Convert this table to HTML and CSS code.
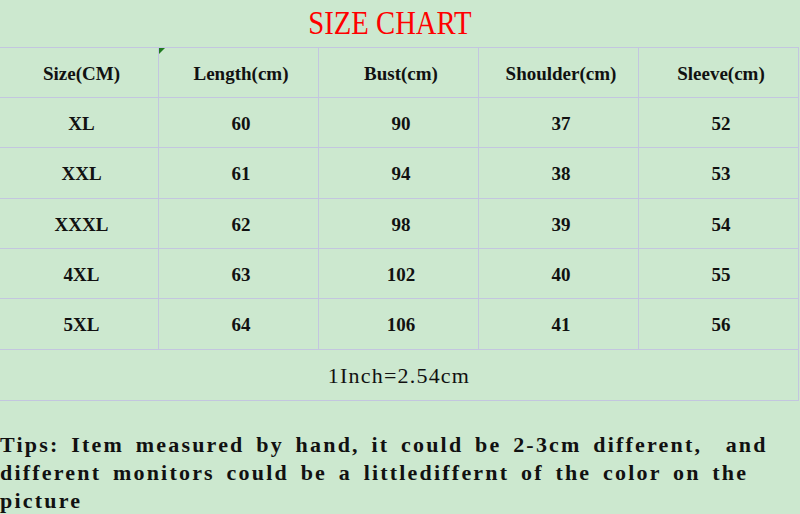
FILE: index.html
```html
<!DOCTYPE html>
<html>
<head>
<meta charset="utf-8">
<link rel="stylesheet" href="styles.css">
</head>
<body>
<div class="page">
  <h1 class="title"><span class="title-text">SIZE CHART</span></h1>
  <div class="chart">
    <div class="cell head">Size(CM)</div>
    <div class="cell head flag">Length(cm)</div>
    <div class="cell head">Bust(cm)</div>
    <div class="cell head">Shoulder(cm)</div>
    <div class="cell head">Sleeve(cm)</div>

    <div class="cell">XL</div><div class="cell">60</div><div class="cell">90</div><div class="cell">37</div><div class="cell">52</div>
    <div class="cell">XXL</div><div class="cell">61</div><div class="cell">94</div><div class="cell">38</div><div class="cell">53</div>
    <div class="cell">XXXL</div><div class="cell">62</div><div class="cell">98</div><div class="cell">39</div><div class="cell">54</div>
    <div class="cell">4XL</div><div class="cell">63</div><div class="cell">102</div><div class="cell">40</div><div class="cell">55</div>
    <div class="cell">5XL</div><div class="cell">64</div><div class="cell">106</div><div class="cell">41</div><div class="cell">56</div>

    <div class="cell inch">1Inch=2.54cm</div>
  </div>
  <p class="tips">Tips: Item measured by hand, it could be 2-3cm different,&nbsp; and different monitors could be a littlediffernt of the color on the picture</p>
</div>
</body>
</html>
```
FILE: styles.css
```css
html, body {
  margin: 0;
  padding: 0;
  background: #cce8cf;
}

.page {
  width: 800px;
  height: 514px;
  overflow: hidden;
  background: #cce8cf;
  color: #111;
}

.title {
  margin: 0;
  height: 47px;
  display: flex;
  justify-content: center;
  padding-right: 21px;
  font-family: "Liberation Serif", serif;
  font-weight: normal;
  font-size: 33px;
  line-height: 47px;
  color: #ff0000;
}

.title-text {
  display: inline-block;
  transform: scaleX(0.87);
}

.chart {
  display: grid;
  grid-template-columns: 159px 160px 160px 160px 160px;
  grid-template-rows: 50px 50px 51px 50px 50px 51px 51px;
  border-top: 1px solid #c3c6df;
  width: 799px;
}

.cell {
  box-sizing: border-box;
  border-right: 1px solid #c3c6df;
  border-bottom: 1px solid #c3c6df;
  display: flex;
  align-items: center;
  justify-content: center;
  padding-left: 5px;
  padding-top: 2px;
  font-family: "Liberation Serif", serif;
  font-weight: bold;
  font-size: 19px;
  position: relative;
}

.cell.flag::before {
  content: "";
  position: absolute;
  left: 0;
  top: 0;
  border-top: 6px solid #1f7a1f;
  border-right: 6px solid transparent;
}

.cell.inch {
  grid-column: 1 / -1;
  padding-left: 0;
  font-size: 22px;
  font-weight: normal;
  letter-spacing: 1.2px;
}

.tips {
  margin: 0;
  padding-top: 30px;
  font-family: "Liberation Serif", serif;
  font-weight: bold;
  font-size: 22px;
  line-height: 28px;
  letter-spacing: 2.2px;
  word-spacing: 4px;
  width: 800px;
}
```
